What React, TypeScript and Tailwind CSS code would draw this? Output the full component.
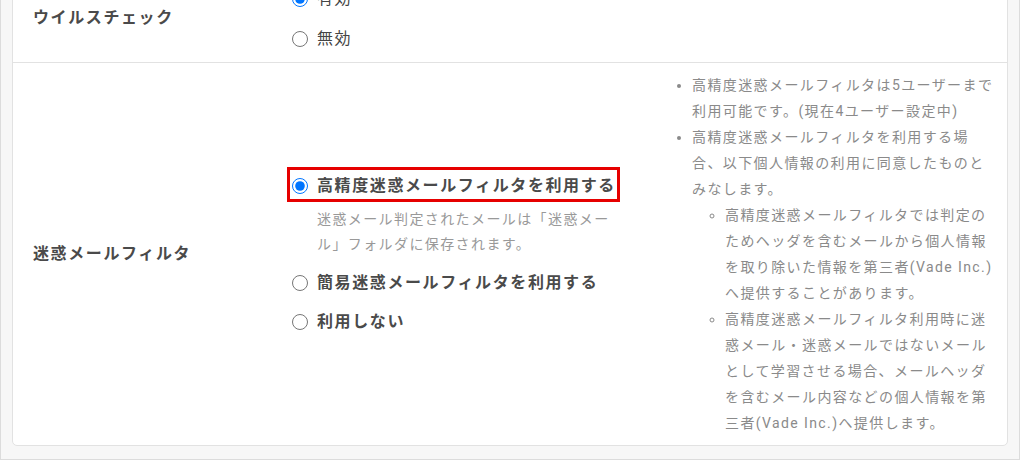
import React from 'react';

const font = { fontFamily: 'Roboto, "Noto Sans CJK JP", sans-serif' };

const Radio: React.FC<{ checked?: boolean; name: string }> = ({ checked, name }) => (
  <input type="radio" name={name} defaultChecked={checked} className="m-0 w-[16px] h-[16px] shrink-0" />
);

export default function App() {
  return (
    <div
      style={font}
      className="w-[1020px] h-[460px] overflow-hidden bg-[#f7f7f7] border-x border-b border-[#dcdcdc] px-[11px] pb-[13px] flex flex-col justify-end"
    >
      <div className="bg-white border border-[#e2e2e2] rounded-b-[5px]">
        {/* ウイルスチェック */}
        <div className="grid grid-cols-[259px_368px_1fr] border-b border-[#e2e2e2]">
          <div className="flex items-center pl-[20px] text-[16px] font-bold tracking-[0.1em] text-[#4a4a4a]">
            ウイルスチェック
          </div>
          <div className="flex flex-col gap-[14px] pl-[20px] pt-[12px] pb-[10px]">
            <label className="flex items-center gap-[9px] h-[26px] text-[16px] tracking-[0.1em] text-[#444]">
              <Radio name="virus" checked />
              有効
            </label>
            <label className="flex items-center gap-[9px] h-[26px] text-[16px] tracking-[0.1em] text-[#444]">
              <Radio name="virus" />
              無効
            </label>
          </div>
          <div />
        </div>

        {/* 迷惑メールフィルタ */}
        <div className="grid grid-cols-[259px_368px_1fr]">
          <div className="flex items-center pl-[20px] text-[16px] font-bold tracking-[0.1em] text-[#4a4a4a]">
            迷惑メールフィルタ
          </div>
          <div className="flex flex-col justify-center gap-[13px] pl-[20px] pr-[20px]">
            <div>
              <label className="relative inline-flex items-center gap-[9px] h-[26px] text-[16px] font-bold tracking-[0.1em] text-[#4a4a4a]">
                <Radio name="spam" checked />
                高精度迷惑メールフィルタを利用する
                <span className="absolute -left-[5px] -top-[6px] -bottom-[3px] -right-[4px] border-[3px] border-[#e60000] pointer-events-none" />
              </label>
              <p className="mt-[6px] pl-[25px] text-[14px] leading-[25px] tracking-[0.1em] text-[#999]">
                迷惑メール判定されたメールは「迷惑メール」フォルダに保存されます。
              </p>
            </div>
            <label className="flex items-center gap-[9px] h-[26px] text-[16px] font-bold tracking-[0.1em] text-[#4a4a4a]">
              <Radio name="spam" />
              簡易迷惑メールフィルタを利用する
            </label>
            <label className="flex items-center gap-[9px] h-[26px] text-[16px] font-bold tracking-[0.1em] text-[#4a4a4a]">
              <Radio name="spam" />
              利用しない
            </label>
          </div>
          <div className="pl-[22px] pr-[10px] py-[9px] text-[14px] leading-[26px] tracking-[0.1em] text-[#8a8a8a]">
            <ul className="list-disc pl-[30px]">
              <li>高精度迷惑メールフィルタは5ユーザーまで利用可能です。(現在4ユーザー設定中)</li>
              <li>
                高精度迷惑メールフィルタを利用する場合、以下個人情報の利用に同意したものとみなします。
                <ul className="list-[circle] pl-[33px]">
                  <li>
                    高精度迷惑メールフィルタでは判定のためヘッダを含むメールから個人情報を取り除いた情報を第三者(Vade Inc.)へ提供することがあります。
                  </li>
                  <li>
                    高精度迷惑メールフィルタ利用時に迷惑メール・迷惑メールではないメールとして学習させる場合、メールヘッダを含むメール内容などの個人情報を第三者(Vade Inc.)へ提供します。
                  </li>
                </ul>
              </li>
            </ul>
          </div>
        </div>
      </div>
    </div>
  );
}
